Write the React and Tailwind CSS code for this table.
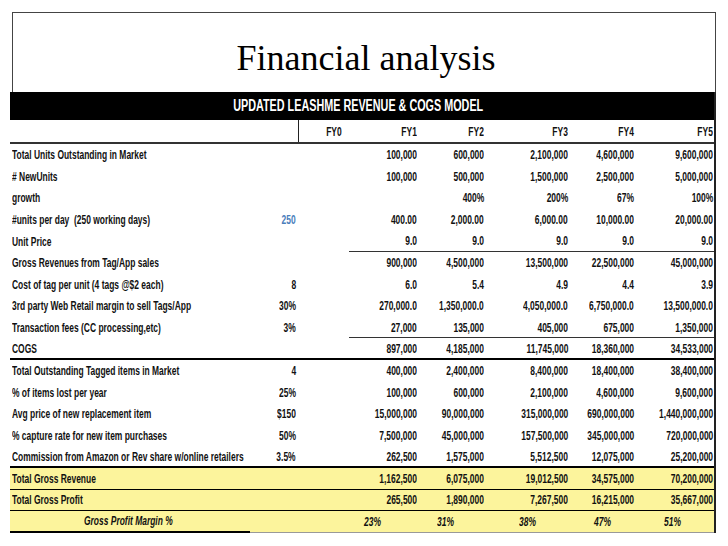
import React from 'react';

const rows = [
  { label: 'Total Units Outstanding in Market', vals: ['100,000', '600,000', '2,100,000', '4,600,000', '9,600,000'] },
  { label: '# NewUnits', vals: ['100,000', '500,000', '1,500,000', '2,500,000', '5,000,000'] },
  { label: 'growth', vals: ['', '400%', '200%', '67%', '100%'] },
  { label: '#units per day  (250 working days)', input: '250', blue: true, vals: ['400.00', '2,000.00', '6,000.00', '10,000.00', '20,000.00'] },
  { label: 'Unit Price', vals: ['9.0', '9.0', '9.0', '9.0', '9.0'], line: true },
  { label: 'Gross Revenues from Tag/App sales', vals: ['900,000', '4,500,000', '13,500,000', '22,500,000', '45,000,000'] },
  { label: 'Cost of tag per unit (4 tags @$2 each)', input: '8', vals: ['6.0', '5.4', '4.9', '4.4', '3.9'] },
  { label: '3rd party Web Retail margin to sell Tags/App', input: '30%', vals: ['270,000.0', '1,350,000.0', '4,050,000.0', '6,750,000.0', '13,500,000.0'] },
  { label: 'Transaction fees (CC processing,etc)', input: '3%', vals: ['27,000', '135,000', '405,000', '675,000', '1,350,000'], line: true },
  { label: 'COGS', vals: ['897,000', '4,185,000', '11,745,000', '18,360,000', '34,533,000'], thick: true },
  { label: 'Total Outstanding Tagged items in Market', input: '4', vals: ['400,000', '2,400,000', '8,400,000', '18,400,000', '38,400,000'] },
  { label: '% of items lost per year', input: '25%', vals: ['100,000', '600,000', '2,100,000', '4,600,000', '9,600,000'] },
  { label: 'Avg price of new replacement item', input: '$150', vals: ['15,000,000', '90,000,000', '315,000,000', '690,000,000', '1,440,000,000'] },
  { label: '% capture rate for new item purchases', input: '50%', vals: ['7,500,000', '45,000,000', '157,500,000', '345,000,000', '720,000,000'] },
  { label: 'Commission from Amazon or Rev share w/online retailers', input: '3.5%', vals: ['262,500', '1,575,000', '5,512,500', '12,075,000', '25,200,000'], thick: true },
  { label: 'Total Gross Revenue', vals: ['1,162,500', '6,075,000', '19,012,500', '34,575,000', '70,200,000'], yellow: true },
  { label: 'Total Gross Profit', vals: ['265,500', '1,890,000', '7,267,500', '16,215,000', '35,667,000'], yellow: true },
];

const colW = ['w-[56px]', 'w-[67px]', 'w-[84px]', 'w-[66px]', 'w-[79px]'];
const pctPad = ['pl-[2px]', 'pl-[19px]', 'pl-[34px]', 'pl-[25px]', 'pl-[29px]'];
const margins = ['23%', '31%', '38%', '47%', '51%'];

// the sheet was squeezed sideways, so text is narrowed with a horizontal scale
function L({ children }) {
  return <span className="inline-block whitespace-pre scale-x-[0.65] origin-left">{children}</span>;
}
function R({ children }) {
  return <span className="inline-block whitespace-pre scale-x-[0.65] origin-right">{children}</span>;
}

function Row({ row }) {
  const rowBorder = row.thick
    ? 'border-b-2 border-black'
    : row.yellow
    ? 'border-b border-black'
    : '';
  return (
    <div className={`flex h-[21.6px] items-center ${rowBorder} ${row.yellow ? 'bg-[#fcf49c]' : ''}`}>
      <div className="w-[240px] pl-[2px] flex shrink-0"><L>{row.label}</L></div>
      <div className={`w-[48px] pr-[2px] flex justify-end shrink-0 ${row.blue ? 'text-[#4a7ebb]' : ''}`}>
        {row.input && <R>{row.input}</R>}
      </div>
      <div className="w-[51px] shrink-0" />
      <div className={`flex h-full items-center ${row.line ? 'border-b border-[#333]' : ''}`}>
        <div className="w-[13px] shrink-0" />
        {row.vals.map((v, i) => (
          <div key={i} className={`${colW[i]} pr-[1px] flex justify-end shrink-0`}>{v && <R>{v}</R>}</div>
        ))}
      </div>
    </div>
  );
}

export default function App() {
  return (
    <div className="w-[728px] h-[546px] bg-white overflow-hidden text-[#111]">
      <div className="ml-[12px] mt-[12px] w-[704px] h-[80px] border-t border-l border-r border-[#444] flex justify-center pt-[27px] pl-[4px]">
        <h1 className="text-[36px] leading-none text-black" style={{ fontFamily: '"Liberation Serif", serif' }}>
          Financial analysis
        </h1>
      </div>

      <div
        className="ml-[10px] w-[706px] border-r-2 border-[#222] text-[13px] font-bold leading-none"
        style={{ fontFamily: '"Liberation Sans", Arial, sans-serif' }}
      >
        <div className="h-[28px] bg-black text-white text-[16px] flex items-center justify-center pr-[8px]">
          <span className="inline-block whitespace-pre scale-x-[0.675]">UPDATED LEASHME REVENUE &amp; COGS MODEL</span>
        </div>

        <div className="flex h-[24px] items-center border-b-2 border-[#333]">
          <div className="w-[288px] shrink-0" />
          <div className="w-[64px] h-full border-l border-[#222] flex items-center justify-center pl-[6px] shrink-0">
            <span className="inline-block scale-x-[0.65]">FY0</span>
          </div>
          {['FY1', 'FY2', 'FY3', 'FY4', 'FY5'].map((f, i) => (
            <div key={f} className={`${colW[i]} pr-[1px] flex justify-end shrink-0`}><R>{f}</R></div>
          ))}
        </div>

        {rows.map((r, i) => (
          <Row key={i} row={r} />
        ))}

        <div className="flex h-[21.6px] items-stretch bg-[#fcf49c] italic">
          <div className="w-[240px] border-b-2 border-black flex items-center pl-[74px] shrink-0">
            <L>Gross Profit Margin %</L>
          </div>
          <div className="flex-1 flex items-center border-b border-[#999]">
            <div className="w-[48px] shrink-0" />
            <div className="w-[51px] shrink-0" />
            <div className="w-[13px] shrink-0" />
            {margins.map((m, i) => (
              <div key={i} className={`${colW[i]} ${pctPad[i]} flex shrink-0`}><L>{m}</L></div>
            ))}
          </div>
        </div>
      </div>
    </div>
  );
}
